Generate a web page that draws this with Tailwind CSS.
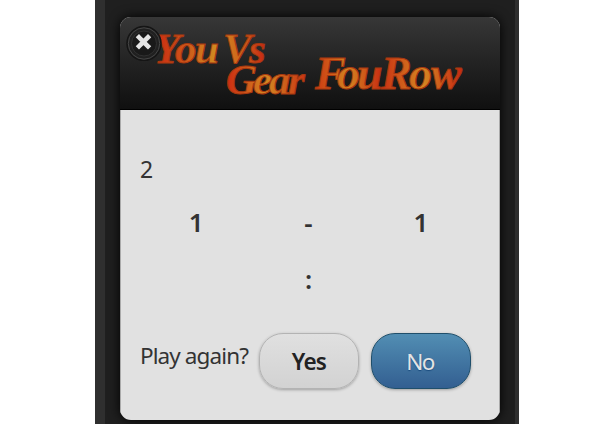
<!DOCTYPE html>
<html lang="en">
<head>
    <meta charset="UTF-8">
    <meta name="viewport" content="width=device-width, initial-scale=1.0">
    <title>You Vs Gear FouRow</title>
    <script src="https://cdn.jsdelivr.net/npm/@tailwindcss/browser@4"></script>
</head>
<body class="h-screen overflow-hidden bg-white pl-[95px] font-['Noto_Sans',sans-serif] text-[#333]">
    <div class="h-[424px] w-[424px] border-r-4 border-l-10 border-[#2f2f2f] bg-[#1f1f1f] pt-[17px] pl-[15px]">
        <!-- Dialog -->
        <div class="h-[403px] w-[380px] overflow-hidden rounded-[11px] bg-[#e1e1e1] shadow-[0_0_12px_#000]">
            <div class="relative h-[93px] border-b border-black bg-linear-to-b from-[#373737] to-[#101010]">
                <svg class="block h-[92px] w-[380px]" viewBox="120 17 380 92" font-family="'Liberation Serif', serif" font-weight="bold" font-style="italic" stroke="#a8380f" stroke-width="1">
                    <defs>
                        <linearGradient id="you" gradientUnits="userSpaceOnUse" x1="157" x2="217"><stop stop-color="#cb2d12"/><stop offset=".3" stop-color="#cc4617"/><stop offset="1" stop-color="#d08c22"/></linearGradient>
                        <linearGradient id="vs" gradientUnits="userSpaceOnUse" x1="228" x2="264"><stop stop-color="#d0781e"/><stop offset=".5" stop-color="#cc5c1a"/><stop offset="1" stop-color="#c92815"/></linearGradient>
                        <linearGradient id="gear" gradientUnits="userSpaceOnUse" x1="227" x2="305"><stop stop-color="#cc2b12"/><stop offset=".5" stop-color="#d28822"/><stop offset="1" stop-color="#c93514"/></linearGradient>
                        <linearGradient id="row" gradientUnits="userSpaceOnUse" x1="314" x2="463"><stop stop-color="#cc3512"/><stop offset=".23" stop-color="#d28420"/><stop offset=".45" stop-color="#c92e13"/><stop offset=".73" stop-color="#d48822"/><stop offset="1" stop-color="#c92413"/></linearGradient>
                    </defs>
                    <text x="154 175 195" y="62.5" font-size="43" fill="url(#you)">You</text>
                    <text x="223 249" y="62.5" font-size="43" fill="url(#vs)">Vs</text>
                    <text x="226 253 269 288" y="94" font-size="43" fill="url(#gear)">Gear</text>
                    <text x="315 337 357 381 409 431" y="88.5" font-size="46" fill="url(#row)">FouRow</text>
                </svg>
                <button class="absolute top-[8px] left-[6px]" aria-label="Close">
                    <svg class="block size-9" viewBox="0 0 36 36" fill="none">
                        <circle cx="18" cy="18.5" r="17" fill="#202020" stroke="#151515" stroke-width="1.5"/>
                        <circle cx="18" cy="18.5" r="15.7" stroke="#464646"/>
                        <circle cx="18" cy="18.5" r="12.5" fill="#191919" stroke="#303030"/>
                        <path d="M13 12.3l9 9M22 12.3l-9 9" stroke="#e4e4e4" stroke-width="4.6" stroke-linecap="square"/>
                    </svg>
                </button>
            </div>
            <div class="h-[310px] border-x border-[#aaa] pt-[43px] pr-[22px] pl-[19px]">
                <p class="text-[23px] leading-8 tracking-[-1px]">2</p>
                <div class="mt-[21px] grid grid-cols-3 text-center text-[26px] leading-8 font-semibold">
                    <span>1</span>
                    <span>-</span>
                    <span>1</span>
                </div>
                <p class="mt-[25px] text-center text-[26px] leading-8 font-semibold">:</p>
                <div class="mt-[38px] flex items-start">
                    <span class="mt-[7px] w-[119px] shrink-0 text-[22.5px] leading-8 tracking-[-0.9px] whitespace-nowrap">Play again?</span>
                    <button class="h-[56px] w-[100px] shrink-0 rounded-[24px] border border-[#b3b3b3] bg-linear-to-b from-[#e0e0e0] to-[#d2d2d2] pt-[2px] text-[22.5px] font-semibold tracking-[-0.8px] text-[#222] shadow-[0_1px_3px_rgba(0,0,0,0.3)]">Yes</button>
                    <button class="ml-[12px] h-[56px] w-[100px] shrink-0 rounded-[24px] border border-[#204f6b] bg-linear-to-b from-[#528eb3] to-[#335f91] pt-[2px] pr-[2px] text-[22.5px] tracking-[-1.5px] text-[#e4e4e4] shadow-[0_1px_3px_rgba(0,0,0,0.3)] text-shadow-[0_1px_1px_#194b7e]">No</button>
                </div>
            </div>
        </div>
    </div>
</body>
</html>
